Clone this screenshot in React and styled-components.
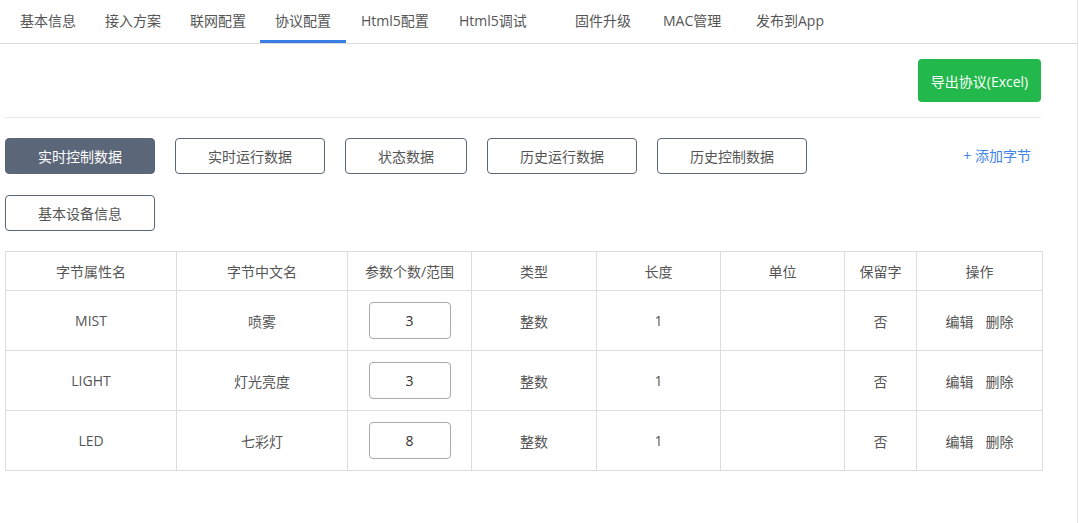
import React from "react";
import styled, { createGlobalStyle } from "styled-components";

const Global = createGlobalStyle`
  html, body { margin: 0; padding: 0; background: #fff; }
  body { font-family: "Open Sans", "Noto Sans CJK SC", sans-serif; font-size: 14px; color: #555; }
  * { box-sizing: border-box; }
`;

const Page = styled.div`
  width: 1078px;
  min-height: 523px;
  border-right: 1px solid #e3e3e3;
`;

const TabBar = styled.div`
  display: flex;
  height: 44px;
  padding-left: 5px;
  border-bottom: 1px solid #dcdcdc;
`;

const Tab = styled.div`
  width: ${(p) => (p.$w ? `${p.$w}px` : "auto")};
  padding-left: 15px;
  height: 43px;
  line-height: 41px;
  font-size: 14px;
  color: #555;
  white-space: nowrap;
  border-bottom: 3px solid ${(p) => (p.$active ? "#3a7ee4" : "transparent")};
  margin-bottom: -1px;
`;

const Content = styled.div`
  padding: 0 36px 0 5px;
`;

const TopRow = styled.div`
  display: flex;
  justify-content: flex-end;
  padding: 15px 0 15px;
  border-bottom: 1px solid #e5e5e5;
`;

const ExportButton = styled.button`
  width: 123px;
  height: 43px;
  background: #22b84b;
  border: none;
  border-radius: 4px;
  color: #fff;
  font-family: inherit;
  font-size: 14px;
`;

const ToolRow = styled.div`
  display: flex;
  justify-content: space-between;
  align-items: flex-start;
  margin-top: 20px;
`;

const ButtonGroup = styled.div`
  display: flex;
  flex-wrap: wrap;
  gap: 21px 20px;
  max-width: 820px;
`;

const TypeButton = styled.button`
  width: ${(p) => p.$w}px;
  height: 36px;
  border-radius: 4px;
  border: 1px solid #5b6678;
  background: ${(p) => (p.$active ? "#5b6678" : "#fff")};
  color: ${(p) => (p.$active ? "#fff" : "#555")};
  font-family: inherit;
  font-size: 14px;
`;

const AddLink = styled.span`
  color: #3f84ec;
  font-size: 14px;
  line-height: 36px;
  margin-right: 10px;
`;

const Table = styled.table`
  margin-top: 20px;
  width: 1037px;
  border-collapse: collapse;
  table-layout: fixed;
`;

const Th = styled.th`
  height: 39px;
  border: 1px solid #dcdcdc;
  font-weight: normal;
  font-size: 14px;
  color: #555;
  text-align: center;
  padding: 0;
`;

const Td = styled.td`
  height: 60px;
  border: 1px solid #dcdcdc;
  font-size: 14px;
  color: #555;
  text-align: center;
  padding: 0;
`;

const NumBox = styled.div`
  width: 82px;
  height: 37px;
  margin: 0 auto;
  border: 1px solid #a9a9a9;
  border-radius: 4px;
  display: flex;
  align-items: center;
  justify-content: center;
  color: #333;
`;

const Action = styled.span`
  margin: 0 6px;
  color: #555;
`;

const tabs = [
  ["基本信息", 85],
  ["接入方案", 85],
  ["联网配置", 85],
  ["协议配置", 86],
  ["Html5配置", 98],
  ["Html5调试", 116],
  ["固件升级", 88],
  ["MAC管理", 93],
  ["发布到App", 0],
];
const types = [
  ["实时控制数据", 150],
  ["实时运行数据", 150],
  ["状态数据", 122],
  ["历史运行数据", 150],
  ["历史控制数据", 150],
  ["基本设备信息", 150],
];
const widths = [171, 171, 124, 125, 124, 124, 72, 126];
const headers = ["字节属性名", "字节中文名", "参数个数/范围", "类型", "长度", "单位", "保留字", "操作"];
const rows = [
  ["MIST", "喷雾", "3"],
  ["LIGHT", "灯光亮度", "3"],
  ["LED", "七彩灯", "8"],
];

export default function App() {
  return (
    <Page>
      <Global />
      <TabBar>
        {tabs.map(([t, w]) => (
          <Tab key={t} $w={w} $active={t === "协议配置"}>{t}</Tab>
        ))}
      </TabBar>
      <Content>
        <TopRow>
          <ExportButton>导出协议(Excel)</ExportButton>
        </TopRow>
        <ToolRow>
          <ButtonGroup>
            {types.map(([t, w], i) => (
              <TypeButton key={t} $w={w} $active={i === 0}>{t}</TypeButton>
            ))}
          </ButtonGroup>
          <AddLink>+ 添加字节</AddLink>
        </ToolRow>
        <Table>
          <colgroup>
            {widths.map((w, i) => (
              <col key={i} style={{ width: w }} />
            ))}
          </colgroup>
          <thead>
            <tr>
              {headers.map((h) => (
                <Th key={h}>{h}</Th>
              ))}
            </tr>
          </thead>
          <tbody>
            {rows.map(([a, b, n]) => (
              <tr key={a}>
                <Td>{a}</Td>
                <Td>{b}</Td>
                <Td><NumBox>{n}</NumBox></Td>
                <Td>整数</Td>
                <Td>1</Td>
                <Td></Td>
                <Td>否</Td>
                <Td><Action>编辑</Action><Action>删除</Action></Td>
              </tr>
            ))}
          </tbody>
        </Table>
      </Content>
    </Page>
  );
}
